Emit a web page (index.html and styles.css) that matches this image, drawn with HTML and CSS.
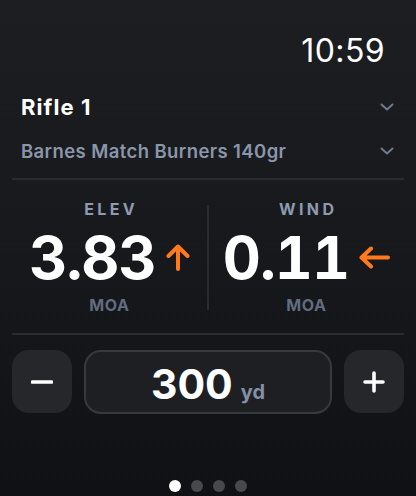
FILE: index.html
```html
<!DOCTYPE html>
<html>
<head>
<meta charset="utf-8">
<link rel="stylesheet" href="styles.css">
</head>
<body>
<div class="screen">
  <div class="status"><span class="time">10:59</span></div>
  <div class="picker rifle">
    <span>Rifle 1</span>
    <svg class="chev" width="14" height="8" viewBox="0 0 14 8"><path d="M1.5 1.5 L7 6.5 L12.5 1.5" fill="none" stroke="#6f7a8c" stroke-width="2" stroke-linecap="round" stroke-linejoin="round"/></svg>
  </div>
  <div class="picker ammo">
    <span>Barnes Match Burners 140gr</span>
    <svg class="chev" width="14" height="8" viewBox="0 0 14 8"><path d="M1.5 1.5 L7 6.5 L12.5 1.5" fill="none" stroke="#6f7a8c" stroke-width="2" stroke-linecap="round" stroke-linejoin="round"/></svg>
  </div>
  <div class="divider"></div>
  <div class="readouts">
    <div class="readout">
      <div class="label">ELEV</div>
      <div class="value">
        <span class="num">3.83</span>
        <svg class="arrow" width="24" height="27" viewBox="0 0 24 27"><path d="M12 25 V3 M2.5 12 L12 2.5 L21.5 12" fill="none" stroke="#ff7a1c" stroke-width="4" stroke-linecap="round" stroke-linejoin="round"/></svg>
      </div>
      <div class="unit">MOA</div>
    </div>
    <div class="vline"></div>
    <div class="readout">
      <div class="label">WIND</div>
      <div class="value">
        <span class="num">0.11</span>
        <svg class="arrow" width="31" height="23" viewBox="0 0 31 23"><path d="M29 11.5 H3 M12 2.5 L2.5 11.5 L12 20.5" fill="none" stroke="#ff7a1c" stroke-width="4" stroke-linecap="round" stroke-linejoin="round"/></svg>
      </div>
      <div class="unit">MOA</div>
    </div>
  </div>
  <div class="divider"></div>
  <div class="range">
    <div class="btn"><svg width="22" height="4" viewBox="0 0 22 4"><path d="M1.5 2 H20.5" stroke="#fff" stroke-width="3.6" stroke-linecap="round"/></svg></div>
    <div class="dist"><span class="dnum">300</span><span class="dunit">yd</span></div>
    <div class="btn"><svg width="22" height="22" viewBox="0 0 22 22"><path d="M2 11 H20 M11 2 V20" stroke="#fff" stroke-width="3.6" stroke-linecap="round"/></svg></div>
  </div>
  <div class="dots">
    <span class="dot on"></span><span class="dot"></span><span class="dot"></span><span class="dot"></span>
  </div>
</div>
</body>
</html>
```
FILE: styles.css
```css
* { box-sizing: border-box; }
html, body { margin: 0; padding: 0; }
body {
  width: 416px;
  height: 496px;
  overflow: hidden;
  background: linear-gradient(180deg, #1d1e22 0%, #16181c 55%, #0f1115 100%);
  font-family: Inter, "Noto Sans", sans-serif;
  color: #fff;
}
.screen {
  height: 496px;
  display: flex;
  flex-direction: column;
}
.status {
  display: flex;
  justify-content: flex-end;
  padding: 35px 31px 0 0;
  height: 96px;
}
.time {
  font-size: 32px;
  line-height: 1;
  font-weight: 400;
  letter-spacing: 0.4px;
}
.picker {
  display: flex;
  align-items: center;
  justify-content: space-between;
  padding: 0 22px 0 21px;
  line-height: 1;
}
.rifle {
  font-size: 22px;
  font-weight: 700;
  height: 22px;
  letter-spacing: 1.1px;
}
.ammo {
  margin-top: 22px;
  font-size: 18.5px;
  font-weight: 600;
  color: #8a96aa;
  height: 22px;
  letter-spacing: 0.4px;
}
.chev { flex: none; }
.divider {
  height: 2px;
  background: #2a2b30;
  margin: 0 12px;
}
.ammo + .divider { margin-top: 16px; }
.readouts {
  display: flex;
  height: 153px;
  margin: 0 12px;
  align-items: stretch;
}
.readout {
  flex: 1;
  display: flex;
  flex-direction: column;
  align-items: center;
  padding-top: 21px;
}
.vline {
  width: 2px;
  background: #2a2b30;
  margin: 25px 0 23px;
}
.label {
  font-size: 16px;
  font-weight: 700;
  line-height: 1;
  letter-spacing: 3.4px;
  margin-right: -3.4px;
  color: #8e9ab0;
}
.value {
  display: flex;
  align-items: center;
  gap: 10px;
  margin-top: 10px;
  height: 60px;
}
.num {
  font-size: 59px;
  font-weight: 700;
  line-height: 1;
  letter-spacing: -1px;
  font-variant-numeric: tabular-nums;
  font-feature-settings: "tnum" 1;
}
.unit {
  margin-top: 10px;
  font-size: 16px;
  font-weight: 700;
  line-height: 1;
  letter-spacing: 0.6px;
  color: #626c7f;
}
.range {
  display: flex;
  gap: 12px;
  padding: 0 12px;
  margin-top: 15px;
  height: 64px;
}
.btn {
  width: 60px;
  height: 63px;
  border-radius: 17px;
  background: #25272b;
  display: flex;
  align-items: center;
  justify-content: center;
}
.dist {
  flex: 1;
  height: 64px;
  border: 2px solid #38393e;
  border-radius: 17px;
  background: #1e1f23;
  display: flex;
  align-items: baseline;
  justify-content: center;
  padding-top: 12px;
  gap: 8px;
}
.dnum {
  font-size: 41px;
  font-weight: 700;
  line-height: 1;
}
.dunit {
  font-size: 20px;
  font-weight: 700;
  color: #8390a5;
}
.dots {
  margin-top: auto;
  display: flex;
  justify-content: center;
  gap: 10px;
  padding-bottom: 4px;
}
.dot {
  width: 12px;
  height: 12px;
  border-radius: 50%;
  background: #48494e;
}
.dot.on { background: #fff; }
```
